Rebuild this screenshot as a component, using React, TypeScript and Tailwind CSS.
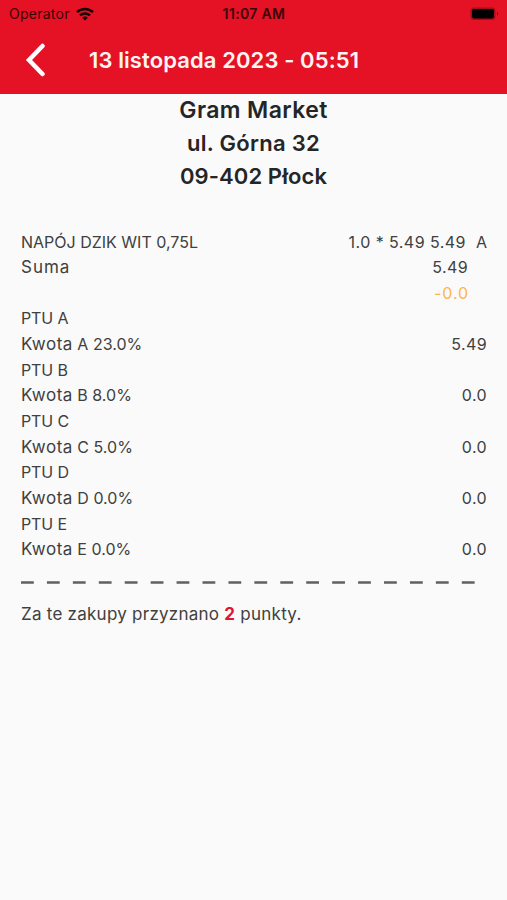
interface TaxRow {
  code: string;
  rate: string;
  amount: string;
}

const TAXES: TaxRow[] = [
  { code: 'A', rate: '23.0%', amount: '5.49' },
  { code: 'B', rate: '8.0%', amount: '0.0' },
  { code: 'C', rate: '5.0%', amount: '0.0' },
  { code: 'D', rate: '0.0%', amount: '0.0' },
  { code: 'E', rate: '0.0%', amount: '0.0' },
];

const SHOP_LINES = [
  { text: 'Gram Market', className: 'text-[23px] leading-[33px] tracking-[0.4px]' },
  { text: 'ul. Górna 32', className: 'tracking-[0.3px]' },
  { text: '09-402 Płock', className: 'tracking-[0.1px]' },
];

function StatusBar() {
  return (
    <div className="grid h-[27px] grid-cols-3 items-center pr-[8px] pl-[9px] text-[14px] text-[#3a0508]">
      <div className="flex items-center gap-1.5">
        <span className="tracking-[0.25px]">Operator</span>
        <svg width="18" height="14" viewBox="0 0 18 14" fill="none" stroke="#160203" strokeWidth="2.5">
          <path d="M1 5.2C5.5 .9 12.5 .9 17 5.2" />
          <path d="M4 8.4C6.8 5.7 11.2 5.7 14 8.4" />
          <path d="M9 13.5 6.2 10.7C7.7 9.2 10.3 9.2 11.8 10.7Z" fill="#160203" stroke="none" />
        </svg>
      </div>
      <span className="text-center font-semibold tracking-[0.35px]">11:07 AM</span>
      <svg className="justify-self-end" width="29" height="14" viewBox="0 0 29 14">
        <rect x=".5" y=".5" width="25" height="12.5" rx="3.5" fill="#a80d19" />
        <rect x="2" y="2" width="22" height="9.5" rx="2" fill="#000" />
        <path d="M27 4.5c1.5 .8 1.5 3.7 0 4.5z" fill="#7a0a12" />
      </svg>
    </div>
  );
}

function Header() {
  return (
    <header className="h-[94px] bg-[#e41224]">
      <StatusBar />
      <div className="flex h-[66px] items-center pl-[25px]">
        <button aria-label="Wstecz">
          <svg width="22" height="34" viewBox="0 0 22 34" fill="none" stroke="#fff" strokeWidth="4.5" strokeLinecap="round">
            <path d="M17.5 3 4 17 17.5 31" />
          </svg>
        </button>
        <h1 className="ml-[42px] text-[22px] font-semibold tracking-[0.1px] whitespace-nowrap text-[#fff4f4]">
          13 listopada 2023 - 05:51
        </h1>
      </div>
    </header>
  );
}

function TaxLines({ tax }: { tax: TaxRow }) {
  return (
    <>
      <div className="tracking-[-0.1px]">PTU {tax.code}</div>
      <div className="flex justify-between">
        <span>
          <span className="text-[17px] tracking-[0.5px]">Kwota</span> {tax.code} {tax.rate}
        </span>
        <span className="tracking-[0.4px]">{tax.amount}</span>
      </div>
    </>
  );
}

export default function App() {
  return (
    <div className="h-[900px] w-[507px] overflow-hidden bg-[#fafafa] font-['Inter',sans-serif] text-[#404040]">
      <Header />
      <div className="flex flex-col items-center text-[22px] leading-[33px] font-semibold text-[#252525]">
        {SHOP_LINES.map((line) => (
          <div key={line.text} className={line.className}>
            {line.text}
          </div>
        ))}
      </div>
      <main className="mt-[36.5px] pr-[20px] pl-[21px] text-[16px] leading-[25.65px] whitespace-nowrap">
        <div className="flex h-[25.65px] justify-between">
          <span>NAPÓJ DZIK WIT 0,75L</span>
          <div className="flex gap-[10px]">
            <span className="tracking-[0.45px]">1.0 * 5.49 5.49</span>
            <span>A</span>
          </div>
        </div>
        <div className="flex h-[25.65px] justify-between pr-[19px]">
          <span className="text-[17px] tracking-[1px]">Suma</span>
          <span className="tracking-[0.4px]">5.49</span>
        </div>
        <div className="pr-[18px] text-right tracking-[0.9px] text-[#fdb64c]">-0.0</div>
        {TAXES.map((tax) => (
          <TaxLines key={tax.code} tax={tax} />
        ))}
        <svg className="mt-[18px] block" width="460" height="3" viewBox="0 0 460 3">
          <line x1="0" y1="1.5" x2="454" y2="1.5" stroke="#606060" strokeWidth="2.7" strokeDasharray="12.8 13.13" />
        </svg>
        <p className="mt-[17.5px] text-[17px] tracking-[0.25px]">
          Za te zakupy przyznano <span className="font-bold text-[#e41230]">2</span> punkty.
        </p>
      </main>
    </div>
  );
}
